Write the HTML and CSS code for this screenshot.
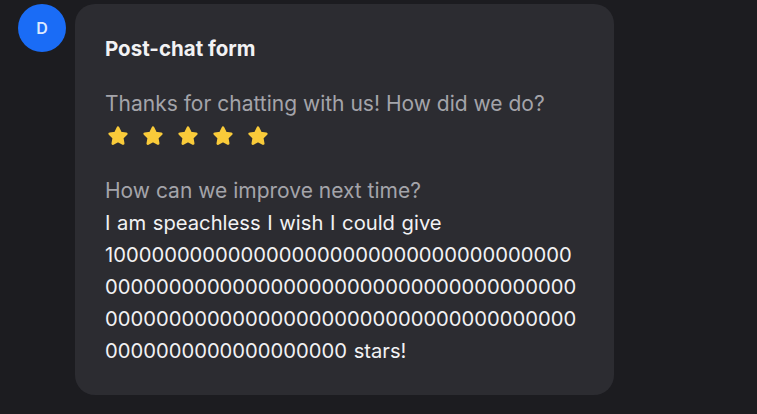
FILE: index.html
```html
<!DOCTYPE html>
<html>
	<head>
		<meta charset="utf-8">
		<link rel="stylesheet" href="styles.css">
	</head>
	<body>
		<div class="message">
			<div class="avatar">D</div>

			<div class="card">
				<h1 class="card-title">Post-chat form</h1>

				<p class="question">Thanks for chatting with us! How did we do?</p>
				<div class="stars">
					<svg class="star" viewBox="0 0 24 24"><polygon points="12,3 14.8,8.8 21,9.6 16.5,14 17.6,20.2 12,17.2 6.4,20.2 7.5,14 3,9.6 9.2,8.8"/></svg>
					<svg class="star" viewBox="0 0 24 24"><polygon points="12,3 14.8,8.8 21,9.6 16.5,14 17.6,20.2 12,17.2 6.4,20.2 7.5,14 3,9.6 9.2,8.8"/></svg>
					<svg class="star" viewBox="0 0 24 24"><polygon points="12,3 14.8,8.8 21,9.6 16.5,14 17.6,20.2 12,17.2 6.4,20.2 7.5,14 3,9.6 9.2,8.8"/></svg>
					<svg class="star" viewBox="0 0 24 24"><polygon points="12,3 14.8,8.8 21,9.6 16.5,14 17.6,20.2 12,17.2 6.4,20.2 7.5,14 3,9.6 9.2,8.8"/></svg>
					<svg class="star" viewBox="0 0 24 24"><polygon points="12,3 14.8,8.8 21,9.6 16.5,14 17.6,20.2 12,17.2 6.4,20.2 7.5,14 3,9.6 9.2,8.8"/></svg>
				</div>

				<p class="question improve">How can we improve next time?</p>
				<p class="answer">I am speachless I wish I could give 1000000000000000000000000000000000000000000000000000000000000000000000000000000000000000000000000000000000000000000000000000000000 stars!</p>
			</div>
		</div>
	</body>
</html>
```

FILE: styles.css
```css
html, body {
	margin: 0;
	background-color: #1c1c20;
}

body {
	padding: 4px 0 0 18px;
	font-family: Inter, "Noto Sans", sans-serif;
	color: #f2f2f4;
}

.message {
	display: flex;
	align-items: flex-start;
	gap: 9px;
}

.avatar {
	width: 48px;
	height: 48px;
	flex: none;
	border-radius: 50%;
	background-color: #1a6cf6;
	color: #dde9ff;
	font-size: 16px;
	font-weight: 600;
	line-height: 48px;
	text-align: center;
}

.card {
	width: 479px;
	padding: 33px 30px 28px;
	border-radius: 20px;
	background-color: #2c2c31;
}

.card-title {
	margin: 0 0 27px;
	font-size: 20.5px;
	font-weight: 700;
	line-height: 24px;
}

.question {
	margin: 0;
	color: #a4a4aa;
	font-size: 21px;
	line-height: 32px;
}

.stars {
	display: flex;
	align-items: center;
	gap: 13px;
	height: 32px;
	padding-left: 2px;
}

.star {
	width: 22px;
	height: 22px;
	fill: #f9cb3a;
	stroke: #f9cb3a;
	stroke-width: 3;
	stroke-linejoin: round;
}

.improve {
	margin-top: 23px;
}

.answer {
	margin: 0;
	font-size: 20.2px;
	line-height: 32px;
	word-spacing: 1px;
	overflow-wrap: anywhere;
}
```
